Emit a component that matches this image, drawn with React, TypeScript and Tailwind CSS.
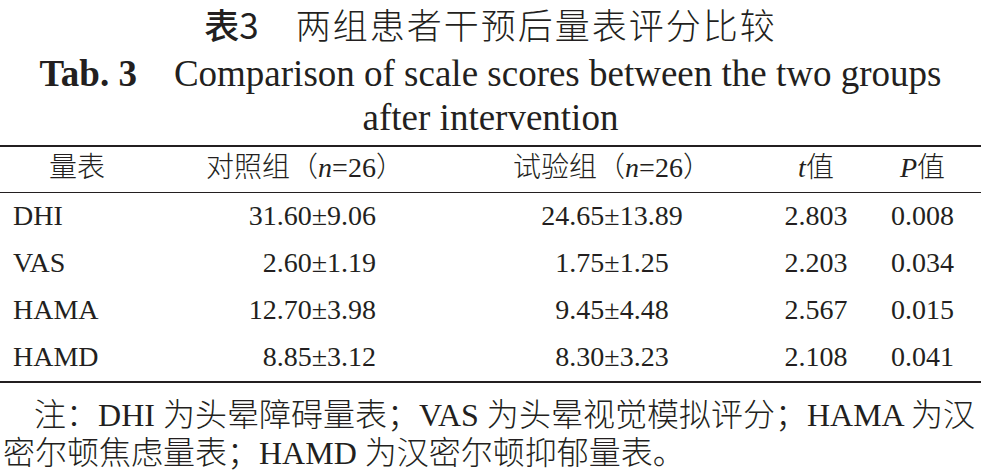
import React from 'react';

const rows = [
  { name: 'DHI', ctrl: '31.60±9.06', test: '24.65±13.89', t: '2.803', p: '0.008' },
  { name: 'VAS', ctrl: '2.60±1.19', test: '1.75±1.25', t: '2.203', p: '0.034' },
  { name: 'HAMA', ctrl: '12.70±3.98', test: '9.45±4.48', t: '2.567', p: '0.015' },
  { name: 'HAMD', ctrl: '8.85±3.12', test: '8.30±3.23', t: '2.108', p: '0.041' },
];

const cols = 'grid grid-cols-[154px_302px_312px_96px_1fr] items-center';

export default function App() {
  return (
    <div className="w-[981px] h-[472px] bg-white text-[#231f20] font-['Liberation_Serif','Noto_Sans_CJK_SC',serif] font-light overflow-hidden">
      {/* Caption */}
      <div className="text-center text-[35px] leading-[48px]">
        <span className="font-['Noto_Sans_CJK_SC',sans-serif]">
          <span className="font-medium">表</span>
          <span className="font-normal">3</span>
        </span>
        <span className="tracking-[2px]">{'\u2003'}两组患者干预后量表评分比较</span>
      </div>
      <div className="text-center text-[37px] leading-[44px] px-[30px] mb-[5px]">
        <span className="font-bold">Tab. 3</span>
        {'\u2003'}Comparison of scale scores between the two groups after intervention
      </div>

      {/* Table */}
      <div className="border-t-2 border-b-2 border-[#231f20] text-[28px]">
        <div className={clsx(cols, 'h-[46px] pb-[3px] border-b border-[#231f20]')}>
          <div className="text-center">量表</div>
          <div className="text-center">对照组（<i>n</i>=26）</div>
          <div className="text-center">试验组（<i>n</i>=26）</div>
          <div className="text-center"><i>t</i>值</div>
          <div className="text-center"><i>P</i>值</div>
        </div>
        {rows.map((r) => (
          <div key={r.name} className={clsx(cols, 'h-[47px] pb-[2px]')}>
            <div className="pl-[13px]">{r.name}</div>
            <div className="text-right pr-[80px]">{r.ctrl}</div>
            <div className="text-center">{r.test}</div>
            <div className="text-center">{r.t}</div>
            <div className="text-center">{r.p}</div>
          </div>
        ))}
      </div>

      {/* Note */}
      <div className="mt-[13px] pl-[3px] pr-[6px] text-[32px] leading-[38px]">
        <div className="pl-[31px] text-justify [text-align-last:justify]">
          注：DHI 为头晕障碍量表；VAS 为头晕视觉模拟评分；HAMA 为汉
        </div>
        <div>密尔顿焦虑量表；HAMD 为汉密尔顿抑郁量表。</div>
      </div>
    </div>
  );
}

function clsx(...c: string[]) {
  return c.join(' ');
}
